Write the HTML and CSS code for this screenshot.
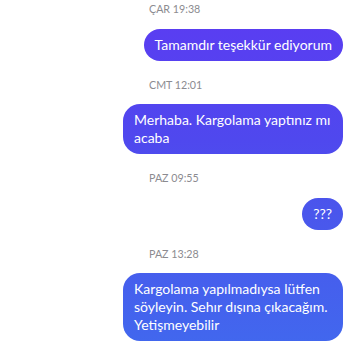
FILE: index.html
```html
<!DOCTYPE html>
<html lang="tr">
<head>
<meta charset="utf-8">
<link rel="stylesheet" href="styles.css">
</head>
<body>
<div class="thread">
  <div class="group">
    <div class="stamp">ÇAR 19:38</div>
    <div class="bubble">Tamamdır teşekkür ediyorum</div>
  </div>
  <div class="group">
    <div class="stamp">CMT 12:01</div>
    <div class="bubble">Merhaba. Kargolama yaptınız mı acaba</div>
  </div>
  <div class="group">
    <div class="stamp">PAZ 09:55</div>
    <div class="bubble">???</div>
  </div>
  <div class="group">
    <div class="stamp">PAZ 13:28</div>
    <div class="bubble">Kargolama yapılmadıysa lütfen söyleyin. Sehır dışına çıkacağım. Yetişmeyebilir</div>
  </div>
</div>
</body>
</html>
```
FILE: styles.css
```css
html, body {
  margin: 0;
  padding: 0;
  background: #ffffff;
}
body {
  font-family: Lato, "Noto Sans", sans-serif;
  width: 350px;
  height: 350px;
  overflow: hidden;
}
.thread {
  display: flex;
  flex-direction: column;
  gap: 17px;
  padding: 2px 7px 0 0;
}
.group {
  display: flex;
  flex-direction: column;
  align-items: flex-end;
  gap: 12.5px;
}
.stamp {
  align-self: flex-start;
  padding-left: 149px;
  font-size: 10.7px;
  line-height: 14px;
  color: #8b8b90;
}
.bubble {
  max-width: 198px;
  padding: 7px 11px;
  border-radius: 17px;
  font-size: 14px;
  line-height: 18px;
  color: #ffffff;
  background: linear-gradient(180deg, #5c3bf2 0px, #4f48ee 140px, #4a56ec 210px, #4168ee 350px);
  background-attachment: fixed;
}
```
